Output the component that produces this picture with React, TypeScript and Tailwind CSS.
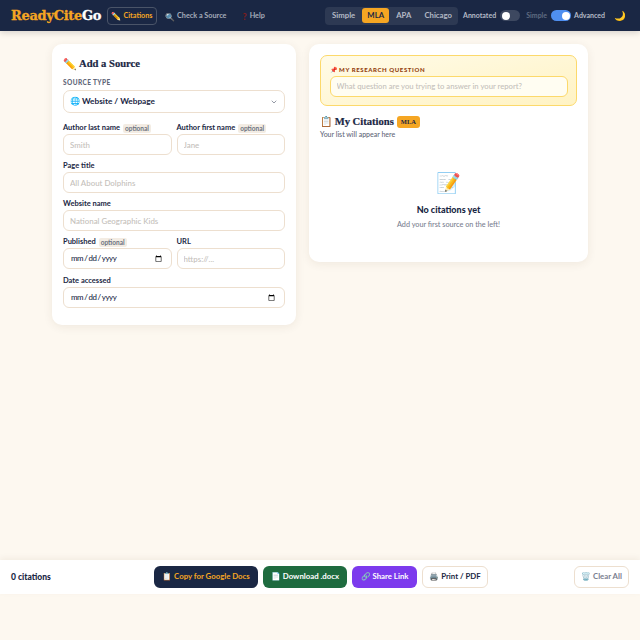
import React from "react";
import { ChevronDown } from "lucide-react";

const sans = "font-['Lato','Noto_Sans',sans-serif]";
const serif = "font-['Liberation_Serif','DejaVu_Serif',serif]";

const inputClass =
  "block h-[21px] w-full rounded-[6px] border-[1.5px] border-[#eddfcf] bg-white px-[6px] text-[7.9px] font-medium text-[#1a2744] placeholder:text-[#c4c0ba] outline-none";

const Optional = () => (
  <span className="rounded-[2px] bg-[#f3ece3] px-[2px] py-[1px] text-[6.5px] font-bold leading-[7px] text-[#6b7280]">optional</span>
);

const Label = ({ text, optional }: { text: string; optional?: boolean }) => (
  <div className="mb-[1px] flex h-[10px] items-center gap-[3px] text-[7.5px] font-bold text-[#1a2744]">
    {text}
    {optional && <Optional />}
  </div>
);

const Field = ({ label, placeholder, optional }: { label: string; placeholder: string; optional?: boolean }) => (
  <div className="min-w-0 flex-1">
    <Label text={label} optional={optional} />
    <input className={inputClass} placeholder={placeholder} readOnly />
  </div>
);

const DateField = ({ label, optional }: { label: string; optional?: boolean }) => (
  <div className="min-w-0 flex-1">
    <Label text={label} optional={optional} />
    <input type="date" className={`${inputClass} h-[21.5px] tracking-[-0.4px]`} />
  </div>
);

const Toggle = ({ on }: { on?: boolean }) => (
  <div className={`flex h-[11px] w-[20px] items-center rounded-full px-[1.5px] ${on ? "justify-end bg-[#4f8ff0]" : "justify-start bg-[#3d4860]"}`}>
    <div className="h-[8px] w-[8px] rounded-full bg-white" />
  </div>
);

const Header = () => (
  <header className="flex h-[31px] shrink-0 items-center justify-between bg-[#1a2744] pl-[11px] pr-[14px] shadow-[0_2px_6px_rgba(0,0,0,0.15)]">
    <div className="flex items-center">
      <div className="w-[89px] font-['DejaVu_Serif',serif] text-[13px] font-bold tracking-[-0.3px] text-[#f5a623] [-webkit-text-stroke:0.3px]">
        ReadyCite<span className="text-white">Go</span>
      </div>
      <nav className="ml-[7px] flex items-center text-[7.25px] font-bold">
        <div className="flex h-[18px] w-[50px] items-center justify-center gap-[2px] rounded-[4px] border border-[#4a5468] pt-[1px] text-[#f5a623]">
          <span className="text-[8px]">✏️</span> Citations
        </div>
        <div className="ml-[8px] flex items-center gap-[2px] pt-[2px] text-[#a5acba]">
          <span className="text-[8px]">🔍</span> Check a Source
        </div>
        <div className="ml-[16px] flex items-center gap-[3px] pt-[2px] text-[#a5acba]">
          <span className="text-[9px] font-black text-[#7f1d1d]">?</span> Help
        </div>
      </nav>
    </div>
    <div className="flex items-center text-[7px] font-bold">
      <div className="flex h-[18px] w-[133px] items-center rounded-[4px] bg-[#2d3953] pl-[7px] text-[7.75px] text-[#b4bac6]">
        <span>Simple</span>
        <span className="ml-[7px] flex h-[15px] w-[27px] items-center justify-center rounded-[3px] bg-[#f5a623] text-[#1a2744]">MLA</span>
        <span className="ml-[7px]">APA</span>
        <span className="ml-[13px]">Chicago</span>
      </div>
      <span className="ml-[5px] text-[#b4bac6]">Annotated</span>
      <div className="ml-[4px]"><Toggle /></div>
      <span className="ml-[6px] text-[#5f6b82]">Simple</span>
      <div className="ml-[4px]"><Toggle on /></div>
      <span className="ml-[3px] text-[#b4bac6]">Advanced</span>
      <span className="ml-[9px] text-[9.5px] leading-none">🌙</span>
    </div>
  </header>
);

const SourceForm = () => (
  <section className="h-[281px] w-[244px] rounded-[10px] bg-white px-[11px] pt-[12px] shadow-[0_2px_10px_rgba(80,50,20,0.08)]">
    <h2 className={`${serif} mt-[1px] flex h-[14px] items-center gap-[2px] text-[10.6px] font-bold text-[#1a2744] [-webkit-text-stroke:0.2px]`}>
      <span className="text-[11px]">✏️</span> Add a Source
    </h2>
    <div className="mb-[2px] mt-[7px] h-[10px] text-[6.5px] font-black leading-[10px] tracking-[0.4px] text-[#5f6779]">SOURCE TYPE</div>
    <div className="flex h-[23px] items-center justify-between rounded-[7px] border-[1.5px] border-[#eddfcf] px-[6px] text-[8.25px] font-bold text-[#1a2744]">
      <span>🌐 Website / Webpage</span>
      <ChevronDown size={8} className="text-[#5f6779]" />
    </div>
    <div className="mt-[10px] flex gap-[5px]">
      <Field label="Author last name" placeholder="Smith" optional />
      <Field label="Author first name" placeholder="Jane" optional />
    </div>
    <div className="mt-[6px]"><Field label="Page title" placeholder="All About Dolphins" /></div>
    <div className="mt-[6px]"><Field label="Website name" placeholder="National Geographic Kids" /></div>
    <div className="mt-[6px] flex gap-[5px]">
      <DateField label="Published" optional />
      <Field label="URL" placeholder="https://..." />
    </div>
    <div className="mt-[7px]"><DateField label="Date accessed" /></div>
  </section>
);

const CitationsPanel = () => (
  <section className="h-[218px] w-[279px] rounded-[10px] bg-white px-[11px] pt-[11px] shadow-[0_2px_10px_rgba(80,50,20,0.08)]">
    <div className="h-[51px] rounded-[7px] border-[1.5px] border-[#fcd96b] bg-gradient-to-br from-[#fffbe8] to-[#fff3c4] px-[8.5px] pt-[8px]">
      <div className="mt-[1px] h-[10px] text-[6px] font-black leading-[10px] tracking-[0.6px] text-[#92400e]">📌 MY RESEARCH QUESTION</div>
      <input
        className="mt-[0.5px] block h-[21px] w-full rounded-[6px] border-[1.5px] border-[#fcd96b] bg-[#fffdf2] px-[6px] text-[7.7px] font-medium placeholder:text-[#c4c0ba] outline-none"
        placeholder="What question are you trying to answer in your report?"
        readOnly
      />
    </div>
    <div className="mt-[9px] flex h-[14px] items-center gap-[3px]">
      <h2 className={`${serif} text-[10.6px] font-bold text-[#1a2744] [-webkit-text-stroke:0.2px]`}>
        <span className="text-[10px]">📋</span> My Citations
      </h2>
      <span className={`${serif} rounded-[3px] bg-[#f5a623] px-[4px] py-[1px] text-[6.5px] font-bold text-[#1a2744]`}>MLA</span>
    </div>
    <p className="h-[10px] text-[7px] font-medium leading-[10px] text-[#5f6779]">Your list will appear here</p>
    <div className="mt-[28px] flex flex-col items-center">
      <span className="text-[20px] leading-[30px]">📝</span>
      <div className="mt-[6px] text-[9px] font-black text-[#1a2744]">No citations yet</div>
      <div className="mt-[3px] text-[7.25px] font-medium text-[#7a8090]">Add your first source on the left!</div>
    </div>
  </section>
);

const ActionButton = ({ className, children }: { className: string; children: React.ReactNode }) => (
  <button className={`flex h-[22px] items-center justify-center gap-[2px] rounded-[6px] text-[7.8px] font-bold ${className}`}>
    {children}
  </button>
);

const Footer = () => (
  <footer className="flex h-[34px] shrink-0 items-center bg-white pl-[11px] pr-[11px] shadow-[0_-2px_6px_rgba(80,50,20,0.06)]">
    <span className="w-[143px] text-[8.5px] font-black text-[#1a2744]">0 citations</span>
    <div className="flex gap-[5px]">
      <ActionButton className="w-[104px] bg-[#1a2744] text-[#f5a623]">📋 Copy for Google Docs</ActionButton>
      <ActionButton className="w-[84px] bg-[#1e6b3f] text-white">📄 Download .docx</ActionButton>
      <ActionButton className="w-[65px] bg-[#7c3aed] text-white">🔗 Share Link</ActionButton>
      <ActionButton className="w-[66px] border-[1.5px] border-[#eddfcf] bg-white text-[#1a2744]">🖨️ Print / PDF</ActionButton>
    </div>
    <ActionButton className="ml-auto w-[55px] border-[1.5px] border-[#eddfcf] bg-white text-[#7a8090]">🗑️ Clear All</ActionButton>
  </footer>
);

export default function App() {
  return (
    <div className={`${sans} flex h-[640px] flex-col overflow-hidden bg-[#fdf8f0]`}>
      <Header />
      <main className="flex h-[529px] shrink-0 items-start justify-center gap-[13px] pt-[13px]">
        <SourceForm />
        <CitationsPanel />
      </main>
      <Footer />
    </div>
  );
}
